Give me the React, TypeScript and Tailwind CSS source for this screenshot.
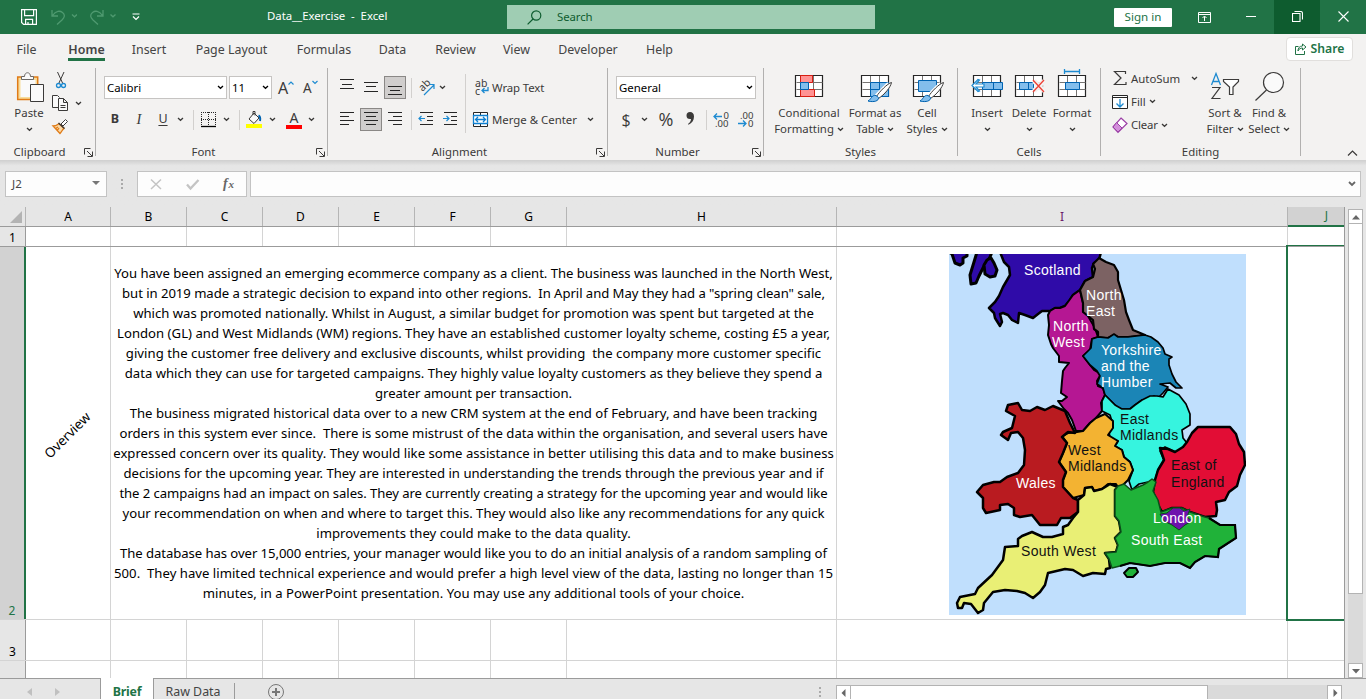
import type { ReactNode } from "react";

type Kids = { children?: ReactNode; className?: string };

/* Vector drawing whose viewBox is given in window coordinates. */
function Art({ x, y, w, h, children, className = "" }: { x: number; y: number; w: number; h: number } & Kids) {
  return (
    <svg width={w} height={h} viewBox={`${x} ${y} ${w} ${h}`} fill="none" stroke="#3b3a39" className={`shrink-0 overflow-visible ${className}`}>
      {children}
    </svg>
  );
}

function Chevron({ className = "text-[#3b3a39]" }: { className?: string }) {
  return (
    <svg width="7" height="5" viewBox="0 0 7 5" fill="none" stroke="currentColor" strokeWidth="1.3" className={`shrink-0 ${className}`}>
      <path d="M1 1l2.5 2.3L6 1" />
    </svg>
  );
}

function Cell({ children, className = "" }: Kids) {
  return <div className={`flex h-full shrink-0 items-center justify-center whitespace-nowrap ${className}`}>{children}</div>;
}

function Group({ label, launcher, children, className = "" }: Kids & { label: string; launcher?: boolean }) {
  return (
    <section className={`flex h-[88px] shrink-0 flex-col border-r border-[#b1b0af] ${className}`}>
      <div className="h-20">{children}</div>
      <div className="flex h-2 items-center">
        <span className="flex-1 text-center">{label}</span>
        {launcher && (
          <span className="w-4 pl-[5px]">
            <svg width="9" height="9" viewBox="0 0 9 9" fill="none" stroke="#3b3a39">
              <path d="M.5 6.5v-6h6M3 3l5 5M8.500 3.500v5h-5" />
            </svg>
          </span>
        )}
      </div>
    </section>
  );
}

function Big({ icon, top, bottom, className = "" }: { icon: ReactNode; top: string; bottom?: string; className?: string }) {
  return (
    <div className={`flex shrink-0 flex-col items-center whitespace-nowrap leading-4 ${className}`}>
      <div className="flex h-[37px] items-start justify-center">{icon}</div>
      <div>{top}</div>
      <div className="flex h-4 items-center gap-[3px]">
        {bottom}
        <Chevron />
      </div>
    </div>
  );
}

function Select({ text, className = "" }: { text: string; className?: string }) {
  return (
    <div className={`flex h-[23px] shrink-0 items-center justify-between border border-[#c6c4c2] bg-white pl-0.5 pr-0.5 text-black ${className}`}>
      {text}
      <Chevron className="text-black" />
    </div>
  );
}

function Lines({ d, on }: { d: string; on?: boolean }) {
  return (
    <div className={on ? "flex h-[23px] w-[22px] items-center justify-center border border-[#8a8886] bg-[#d0cecd]" : "flex"}>
      <svg width="15" height="15" viewBox="0 0 15 15" stroke="#262626" fill="none" className="shrink-0 overflow-visible">
        <path d={d} />
      </svg>
    </div>
  );
}

function Divider({ className = "" }: { className?: string }) {
  return <div className={`w-px shrink-0 bg-[#d2d0ce] ${className}`} />;
}

function TitleBar() {
  return (
    <header className="flex h-[34px] items-center bg-[#217346] text-[11.4px] text-white">
      <div className="flex w-[145px] items-center pl-[21px]">
        <svg width="16" height="16" viewBox="0 0 16 16" fill="none" stroke="#fff" strokeWidth="1.2">
          <path d="M.6.6h14.800v14.800H2.600L.6 13.400zM3.600.6v6h9v-6M4.600 15.400v-5h7v5M7 15v-2" />
        </svg>
        <svg width="26" height="16" viewBox="0 0 26 16" fill="none" stroke="#4f9a70" strokeWidth="1.300" className="ml-[14px]">
          <path d="M1 1v6h6M1.500 6.500C5 1.500 9 1.500 11.500 3.500c3 2.500 2 5-.5 7.500l-5 4.500M21 5.500l2.500 2.300L26 5.500" />
        </svg>
        <svg width="28" height="16" viewBox="0 0 28 16" fill="none" stroke="#4f9a70" strokeWidth="1.300" className="ml-3">
          <path d="M14 1v6H8M13.500 6.500C10 1.500 6 1.500 3.500 3.500c-3 2.500-2 5 .5 7.500l5 4.500M21.500 5.500L24 7.800l2.500-2.300" />
        </svg>
        <svg width="8" height="8" viewBox="0 0 8 8" fill="none" stroke="#fff" strokeWidth="1.200" className="ml-[15px] shrink-0">
          <path d="M.5 1h7M1 3.500l3 3 3-3" />
        </svg>
      </div>
      <div className="w-[362px] whitespace-pre pb-0.5 pl-[122px] tracking-[-0.03px]">Data__Exercise  -  Excel</div>
      <div className="flex h-6 w-[368px] items-center bg-[#9fcdb3] pl-5 text-[#0e5c2f]">
        <svg width="15" height="15" viewBox="0 0 15 15" fill="none" stroke="currentColor" strokeWidth="1.200">
          <circle cx="9.200" cy="5.500" r="4.600" />
          <path d="M6 9L.6 14.400" />
        </svg>
        <span className="pl-[15px] tracking-[-0.1px]">Search</span>
      </div>
      <div className="ml-[239px] flex h-[19px] w-[58px] items-center justify-center rounded-[1px] bg-white text-[11.600px] text-[#217346]">Sign in</div>
      <div className="ml-[26px] w-12">
        <svg width="13" height="11" viewBox="0 0 13 11" fill="none" stroke="#fff">
          <path d="M.5.5h12v10H.5zM.5 2.500h12M6.500 9V4.500M4.500 6l2-2 2 2" />
        </svg>
      </div>
      <div className="mb-0.5 h-px w-2.5 bg-white" />
      <div className="ml-[18px] flex h-full w-[46px] items-center justify-center bg-[#0e5c2f] pb-0.5">
        <svg width="11" height="11" viewBox="0 0 11 11" fill="none" stroke="#fff" strokeWidth="1.100">
          <path d="M.5 2.500h7.500v8H.5zM2.500.5H8.500Q10.500.5 10.500 2.500V8.500" />
        </svg>
      </div>
      <div className="flex flex-1 items-center justify-center pb-0.5">
        <svg width="11" height="11" viewBox="0 0 11 11" stroke="#fff" strokeWidth="1.100">
          <path d="M.5.5l10 10M10.500.5l-10 10" />
        </svg>
      </div>
    </header>
  );
}

const tabs: [string, string][] = [
  ["File", "w-[53px]"],
  ["Home", "w-[67px]"],
  ["Insert", "w-[58px]"],
  ["Page Layout", "w-[107px]"],
  ["Formulas", "w-[78px]"],
  ["Data", "w-[59px]"],
  ["Review", "w-[67px]"],
  ["View", "w-[55px]"],
  ["Developer", "w-[88px]"],
  ["Help", "w-[55px]"],
];

function TabRow() {
  return (
    <nav className="flex h-[34px] items-start text-[12.4px] leading-5 text-[#444]">
      {tabs.map(([name, w]) => (
        <div key={name} className={`flex shrink-0 justify-center pt-1.5 ${w}`}>
          {name === "Home" ? (
            <span className="h-[21px] border-b-[3px] border-[#217346] font-semibold leading-5 tracking-[0.1px]">{name}</span>
          ) : (
            name
          )}
        </div>
      ))}
      <div className="ml-auto mr-[13px] mt-[3px] flex h-6 w-[67px] items-center justify-center gap-1 rounded-sm border border-[#e1dfdd] bg-white text-[12.200px] font-semibold text-[#217346]">
        <svg width="12" height="12" viewBox="0 0 12 12" fill="none" stroke="currentColor">
          <path d="M3.500 3.500H.5v8h9V8M7.500 1l3.500 3-3.500 3V5C5.500 5 4 5.800 3 8c0-3 1.500-5 4.500-5z" />
        </svg>
        Share
      </div>
    </nav>
  );
}

function TableGrid({ x }: { x: number }) {
  return (
    <>
      <path fill="#fff" stroke="#262626" strokeWidth="1.200" d={`M${x} 75.500h27v21h-27z`} />
      <path stroke="#767472" d={`M${x + 1} 82.500h26M${x + 1} 89.500h26M${x + 9} 76v20M${x + 18} 76v20`} />
    </>
  );
}

function Brush({ x }: { x: number }) {
  return (
    <>
      <path stroke="#fff" strokeWidth="5" d={`M${x + 27} 84l-13 13`} />
      <path fill="#fff" stroke="#3b3a39" d={`M${x + 29.5} 82.500c-4 1-12 9-15 14l2 2c6-4 12-11 13-16z`} />
      <path fill="#83beec" stroke="#0063b1" d={`M${x + 14} 95.500c-4-1-5 4-8 5.500 6 1.500 11 0 10.500-3.500z`} />
    </>
  );
}

function Ribbon() {
  return (
    <div className="flex h-[92px] items-start bg-[#f3f2f1] text-[11.4px] text-[#3b3a39]">
      <Group label="Clipboard" launcher className="w-24">
        <div className="flex">
          <Big
            className="w-[58px]"
            top="Paste"
            icon={
              <Art x={13} y={68} w={34} h={37}>
                <path fill="#f8dd9b" stroke="#e07b17" strokeWidth="1.500" d="M18.700 77h20v22.500h-20z" />
                <path fill="#fafafa" stroke="none" d="M21.500 80h15v17h-15z" />
                <path fill="#fafafa" stroke="#6b6967" d="M22.500 79.500v-3h3c0-5 6-5 6 0h3v3z" />
                <path fill="#fafafa" d="M31.500 84.500h13v17h-13z" />
              </Art>
            }
          />
          <div className="-ml-2 w-[21px]">
            <div className="flex h-6 items-center justify-center">
              <Art x={54} y={71} w={13} h={17}>
                <path d="M57.500 71l5.500 12M64 71l-5.500 12" />
                <circle cx="58.500" cy="84.500" r="2" stroke="#1e8bd1" strokeWidth="1.300" />
                <circle cx="63.500" cy="84.500" r="2" stroke="#1e8bd1" strokeWidth="1.300" />
              </Art>
            </div>
            <div className="flex h-[23px] items-center justify-center">
              <Art x={53} y={95} w={17} h={17}>
                <path fill="#fafafa" d="M59.500 107.500h-6v-12h5l2 2M59.500 98.500h5l4 4v8h-9zM64.500 98.500v4h4M61.500 105.500h5M61.500 107.500h5" />
              </Art>
            </div>
            <div className="flex h-[22px] items-center justify-center">
              <Art x={53} y={119} w={17} h={15}>
                <path fill="#fff" d="M62 124l4.500-4.500 2 2L64 126z" />
                <path fill="#fbd9a5" stroke="#e07b17" strokeWidth="1.300" d="M54 126c3 0 4-1 6-2.500l5 5c-2 1.500-2 3-4 5zM56 129l3-2M58 131l2-3" />
                <path stroke="#3b3a39" strokeWidth="1.300" d="M59.500 123l6 5.500" />
              </Art>
            </div>
          </div>
          <div className="flex h-[71px] w-[14px] items-center justify-center">
            <Chevron />
          </div>
        </div>
      </Group>

      <Group label="Font" launcher className="w-[232px]">
        <div className="flex gap-[2px] pl-2 pt-2">
          <Select text="Calibri" className="w-[123px]" />
          <Select text="11" className="w-[43px]" />
          <div className="flex h-[23px] w-[27px] items-center pl-1">
            <span className="text-[16px]">A</span>
            <svg width="6" height="14" viewBox="0 0 6 14" fill="none" stroke="#1e8bd1" strokeWidth="1.200">
              <path d="M.5 3.500L3 1l2.500 2.500" />
            </svg>
          </div>
          <div className="flex h-[23px] w-[21px] items-center pt-px">
            <span className="text-[13.500px]">A</span>
            <svg width="6" height="16" viewBox="0 0 6 16" fill="none" stroke="#1e8bd1" strokeWidth="1.200">
              <path d="M.5 1L3 3.500 5.500 1" />
            </svg>
          </div>
        </div>
        <div className="mt-[9px] flex h-[23px] pl-2 text-[12.500px]">
          <Cell className="w-[22px] font-bold">B</Cell>
          <Cell className="w-[26px] font-['Liberation_Serif'] text-[14.500px] italic">I</Cell>
          <Cell className="w-[22px] underline underline-offset-2">U</Cell>
          <Cell className="w-3"><Chevron /></Cell>
          <Cell className="w-[15px]"><Divider className="h-5" /></Cell>
          <Cell className="w-4">
            <Art x={201} y={111} w={16} h={16}>
              <path strokeDasharray="1 1" stroke="#262626" d="M201 111.500h15M201.500 111v14M215.500 111v14M208.500 111v14M201 118.500h15" />
              <path stroke="#000" strokeWidth="1.300" d="M201 125.500h15" />
            </Art>
          </Cell>
          <Cell className="w-[18px]"><Chevron /></Cell>
          <Cell className="w-2"><Divider className="h-5" /></Cell>
          <Cell className="w-[23px]">
            <Art x={247} y={110} w={17} h={18}>
              <path fill="#fafafa" d="M250 118l5-6 5 5-5 5.500zM254 114v-3.500h2v4" />
              <path stroke="#0063b1" strokeWidth="2" d="M259.500 114.500c2 1 2 3 1.500 5.500" />
              <path fill="#ff0" stroke="none" d="M247 123h16v4h-16z" />
            </Art>
          </Cell>
          <Cell className="w-[13px]"><Chevron /></Cell>
          <Cell className="w-[30px] flex-col">
            <span className="text-[14px] leading-[13px]">A</span>
            <span className="mt-px h-1 w-4 bg-[#f00]" />
          </Cell>
          <Cell className="w-[5px]"><Chevron /></Cell>
        </div>
      </Group>

      <Group label="Alignment" launcher className="w-[280px]">
        <div className="flex h-full">
          <div className="w-[137px] pl-2 pt-2">
            <div className="flex h-[23px]">
              <Cell className="w-[22px]"><Lines d="M0-.5h14M2 4.500h10M0 8.500h14" /></Cell>
              <Cell className="w-[26px]"><Lines d="M0 2.500h14M2 6.500h10M0 11.500h14" /></Cell>
              <Cell className="w-[22px]"><Lines on d="M0 6.500h14M2 10.500h10M0 14.500h14" /></Cell>
              <Cell className="w-[10px]"><Divider className="h-5" /></Cell>
              <Cell className="w-[20px]">
                <Art x={417} y={78} w={18} h={18}>
                  <text x="0" y="0" transform="translate(422.500 91) rotate(-45)" fontSize="10.500" stroke="none" fill="#3b3a39">ab</text>
                  <path stroke="#1e8bd1" strokeWidth="1.200" d="M424 94l10-10M429.500 83.500h4.500v4.500" />
                </Art>
              </Cell>
              <Cell className="w-[12px]"><Chevron /></Cell>
            </div>
            <div className="mt-[9px] flex h-[23px]">
              <Cell className="w-[22px]"><Lines d="M0 .5h14M0 4.500h9M0 8.500h14M0 12.500h9" /></Cell>
              <Cell className="w-[26px]"><Lines on d="M0 .5h14M2 4.500h10M0 8.500h14M2 12.500h10" /></Cell>
              <Cell className="w-[22px]"><Lines d="M0 .5h14M5 4.500h9M0 8.500h14M5 12.500h9" /></Cell>
              <Cell className="w-[10px]"><Divider className="h-5" /></Cell>
              <Cell className="w-[20px] pb-0.5">
                <Art x={418} y={112} w={16} h={14}>
                  <path stroke="#262626" d="M420 112.500h13M427 116.500h6M427 120.500h6M420 124.500h13" />
                  <path stroke="#1e8bd1" strokeWidth="1.200" d="M419 118.500h6M421.500 116l-2.500 2.500 2.500 2.500" />
                </Art>
              </Cell>
              <Cell className="w-[28px] pb-0.5">
                <Art x={442} y={112} w={16} h={14}>
                  <path stroke="#262626" d="M444 112.500h13M451 116.500h6M451 120.500h6M444 124.500h13" />
                  <path stroke="#1e8bd1" strokeWidth="1.200" d="M443 118.500h6M446.500 116l2.500 2.500-2.500 2.500" />
                </Art>
              </Cell>
            </div>
          </div>
          <Divider className="mt-1.5 h-[59px]" />
          <div className="pl-[7px] pt-2">
            <div className="flex h-[23px] items-center gap-0.5 pl-0.5">
              <Art x={475} y={78} w={15} h={19}>
                <text x="475" y="87" fontSize="10.500" stroke="none" fill="#3b3a39">ab</text>
                <text x="475" y="95" fontSize="10.500" stroke="none" fill="#3b3a39">c</text>
                <path stroke="#1e8bd1" strokeWidth="1.300" d="M488 87v3.500h-6M484.500 88l-2.500 2.500 2.500 2.500" />
              </Art>
              <span className="tracking-[-0.1px]">Wrap Text</span>
            </div>
            <div className="mt-[9px] flex h-[23px] items-center">
              <Art x={473} y={111} w={16} h={16}>
                <path fill="#fff" stroke="#262626" d="M473.500 111.500h14v14h-14zM480.500 112v3M480.500 122v4" />
                <path fill="#fff" stroke="#0e7fd0" strokeWidth="1.300" d="M473.500 114.500h14v8h-14zM475.500 118.500h10M478 116l-2.500 2.500L478 121M483 116l2.500 2.500L483 121" />
              </Art>
              <span className="w-[98px] pl-[3px]">Merge &amp; Center</span>
              <Chevron />
            </div>
          </div>
        </div>
      </Group>

      <Group label="Number" launcher className="w-[156px]">
        <div className="pl-2 pt-2">
          <Select text="General" className="w-[140px]" />
          <div className="mt-[9px] flex h-[23px]">
            <Cell className="w-5 font-['Open_Sans'] text-[16px]">$</Cell>
            <Cell className="w-4"><Chevron /></Cell>
            <Cell className="w-7 font-['Open_Sans'] text-[18px]">%</Cell>
            <Cell className="w-5 pb-0.5">
              <svg width="9" height="13" viewBox="0 0 9 13" fill="#3b3a39">
                <path d="M4 0a3.500 3.500 0 0 0 0 7h1c0 2-1.500 4-3 5l.5.8C6 11 8 8.500 8 4.500 8 1.500 6.500 0 4 0z" />
              </svg>
            </Cell>
            <Cell className="w-3"><Divider className="h-5" /></Cell>
            <Cell className="w-[18px]">
              <Art x={712} y={110} w={16} h={17}>
                <text x="722.500" y="118" fontSize="9.500" stroke="none" fill="#3b3a39">0</text>
                <text x="714" y="126" fontSize="9.500" stroke="none" fill="#3b3a39">.00</text>
                <path stroke="#1e8bd1" strokeWidth="1.300" d="M713 115.500h8M716 112.500l-3 3 3 3" />
              </Art>
            </Cell>
            <Cell className="w-8">
              <Art x={737} y={110} w={17} h={17}>
                <text x="739" y="118" fontSize="9.500" stroke="none" fill="#3b3a39">.00</text>
                <text x="747" y="126" fontSize="9.500" stroke="none" fill="#3b3a39">0</text>
                <path stroke="#1e8bd1" strokeWidth="1.300" d="M737 122.500h8M742 119.500l3 3-3 3" />
              </Art>
            </Cell>
          </div>
        </div>
      </Group>

      <Group label="Styles" className="w-[194px]">
        <div className="flex pl-[13px]">
          <Big
            className="w-16"
            top="Conditional"
            bottom="Formatting"
            icon={
              <Art x={794} y={68} w={30} h={34}>
                <TableGrid x={795.5} />
                <path fill="#ff9393" stroke="#d81e12" d="M800.500 75.500h12v7h-12zM800.500 89.500h14v7h-14z" />
                <path fill="#83beec" stroke="#0063b1" d="M800.500 82.500h8v7h-8z" />
              </Art>
            }
          />
          <Big
            className="ml-[7px] w-[54px] tracking-[-0.1px]"
            top="Format as"
            bottom="Table"
            icon={
              <Art x={859} y={68} w={32} h={36}>
                <TableGrid x={861.5} />
                <path fill="#83beec" stroke="#0063b1" d="M870.500 82.500h18v14h-18zM870.500 89.500h18M879.500 82v14" />
                <Brush x={862} />
              </Art>
            }
          />
          <Big
            className="ml-0.5 w-[46px]"
            top="Cell"
            bottom="Styles"
            icon={
              <Art x={911} y={68} w={32} h={36}>
                <TableGrid x={913.5} />
                <path fill="#83beec" stroke="#0063b1" d="M918.500 80.500h18v11h-18z" />
                <Brush x={914} />
              </Art>
            }
          />
        </div>
      </Group>

      <Group label="Cells" className="w-[143px]">
        <div className="flex pl-[7px]">
          <Big
            className="w-11"
            top="Insert"
            icon={
              <Art x={971} y={68} w={33} h={34}>
                <TableGrid x={973.5} />
                <path fill="#83beec" stroke="#0063b1" d="M982.500 82.500h20v7h-20zM993.500 82v7" />
                <path fill="#fff" stroke="#1e8bd1" strokeWidth="1.200" d="M984 84h-8l3.500-4-1.500-.5-6 6 6 6 1.500-.500-3.500-4h8z" />
              </Art>
            }
          />
          <Big
            className="w-10"
            top="Delete"
            icon={
              <Art x={1014} y={68} w={31} h={34}>
                <TableGrid x={1015.5} />
                <path fill="#83beec" stroke="#0063b1" d="M1019.500 82.500h14v7h-14zM1028.500 82v7" />
                <path stroke="#f3f2f1" strokeWidth="5" d="M1034 81l10 10M1044 81l-10 10" />
                <path stroke="#ee4136" strokeWidth="1.300" d="M1033 80l11 12M1044 80l-11 12" />
              </Art>
            }
          />
          <Big
            className="w-[46px]"
            top="Format"
            icon={
              <Art x={1056} y={68} w={31} h={34}>
                <TableGrid x={1057.5} />
                <path fill="#83beec" stroke="#0063b1" d="M1064.500 82.500h14v7h-14z" />
                <path stroke="#1e8bd1" strokeWidth="1.300" d="M1063.500 71.500h15M1063.500 69v5M1078.500 69v5" />
              </Art>
            }
          />
        </div>
      </Group>

      <Group label="Editing" className="w-[200px]">
        <div className="flex">
          <div className="w-[100px] pl-3">
            <div className="flex h-[21px] items-center">
              <Art x={1113} y={71} w={14} h={15}>
                <path strokeWidth="1.200" d="M1125.500 74v-2.500h-11l6.500 6.500-6.500 6.500h11.500V82" />
              </Art>
              <span className="w-16 pl-1">AutoSum</span>
              <Chevron />
            </div>
            <div className="flex h-[25px] items-center">
              <Art x={1113} y={94} w={16} h={14}>
                <path fill="#fff" stroke="#262626" d="M1112.500 94.500h15v13h-15zM1113 96.500h14" />
                <path stroke="#1e8bd1" strokeWidth="1.300" d="M1120 98v7.500M1116.500 102.500l3.500 3.500 3.500-3.500" />
              </Art>
              <span className="pl-0.5 pr-[3px]">Fill</span>
              <Chevron />
            </div>
            <div className="flex h-[22px] items-center">
              <Art x={1113} y={116} w={16} h={16}>
                <path fill="#fff" stroke="#9b3fa6" strokeWidth="1.200" d="M1121 117l6 5.500-9 9-5-5.500z" />
                <path fill="#d38fdb" stroke="#9b3fa6" d="M1116.500 121.500l5.500 5.500-4 4-5-5z" />
              </Art>
              <span className="pl-0.5 pr-[3px] tracking-[-0.15px]">Clear</span>
              <Chevron />
            </div>
          </div>
          <Big
            className="w-12"
            top="Sort &amp;"
            bottom="Filter"
            icon={
              <Art x={1210} y={68} w={30} h={34}>
                <path stroke="#1e8bd1" strokeWidth="1.300" d="M1211.500 85l4.500-11.500 4.500 11.500M1213 81.500h6" />
                <path strokeWidth="1.200" d="M1212 87.500h8l-8 11h8.500" />
                <path fill="#fff" strokeWidth="1.200" d="M1223.500 79.500h15v2l-5.500 5.500v7.500h-3.500V87l-6-5.500z" />
              </Art>
            }
          />
          <Big
            className="w-10"
            top="Find &amp;"
            bottom="Select"
            icon={
              <Art x={1253} y={68} w={31} h={34}>
                <circle cx="1272.500" cy="82.500" r="10" fill="#fafafa" strokeWidth="1.200" />
                <path strokeWidth="1.200" d="M1265.500 90l-11 10.500" />
              </Art>
            }
          />
        </div>
      </Group>

      <div className="flex h-full flex-1 items-end justify-end pb-1 pr-2">
        <svg width="11" height="6" viewBox="0 0 11 6" fill="none" stroke="#3b3a39" strokeWidth="1.200">
          <path d="M1 5.500L5.500 1 10 5.500" />
        </svg>
      </div>
    </div>
  );
}

function FormulaBar() {
  return (
    <div className="flex h-[47px] items-start bg-gradient-to-b from-[#cfcfcf] from-0% to-[#e6e6e6] to-[12%] pl-[5px] pt-[11px] text-[11.500px] text-[#444]">
      <div className="flex h-[26px] w-[102px] items-center justify-between border border-[#c3c3c3] bg-[#fdfdfd] pl-1.5 pr-1.5">
        J2
        <svg width="8" height="4" viewBox="0 0 8 4" fill="#777" className="mb-0.5"><path d="M0 0h8L4 4z" /></svg>
      </div>
      <div className="flex h-[26px] w-[30px] flex-col items-center justify-center gap-0.5">
        <span className="size-0.5 bg-[#aaa]" />
        <span className="size-0.5 bg-[#aaa]" />
        <span className="size-0.5 bg-[#aaa]" />
      </div>
      <div className="flex h-[26px] w-[110px] items-center border border-[#c3c3c3] bg-[#fdfdfd]">
        <svg width="108" height="24" viewBox="138 172 108 24" fill="none" stroke="#c4c4c4" strokeWidth="1.800">
          <path d="M151 179.500l10 9.500M161 179.500l-10 9.500" strokeWidth="1.500" />
          <path d="M187 184.500l3.500 4 8-8.500" strokeWidth="2.300" />
          <text x="223" y="188" fontSize="14" fontStyle="italic" fontWeight="bold" fontFamily="Liberation Serif" stroke="none" fill="#666">f</text>
          <text x="228.500" y="188" fontSize="11" fontStyle="italic" fontWeight="bold" fontFamily="Liberation Serif" stroke="none" fill="#666">x</text>
        </svg>
      </div>
      <div className="ml-[3px] flex h-[26px] w-[1111px] items-center justify-end border border-[#c3c3c3] bg-[#fdfdfd] pr-1">
        <svg width="8" height="6" viewBox="0 0 8 6" fill="none" stroke="#666" strokeWidth="1.800"><path d="M1 1l3 3 3-3" /></svg>
      </div>
    </div>
  );
}

const lines: [string, string][] = [
  ["You have been assigned an emerging ecommerce company as a client. The business was launched in the North West,", "tracking-[-0.03px]"],
  ["but in 2019 made a strategic decision to expand into other regions.  In April and May they had a \"spring clean\" sale,", "tracking-[-0.05px]"],
  ["which was promoted nationally. Whilst in August, a similar budget for promotion was spent but targeted at the", "tracking-[-0.01px]"],
  ["London (GL) and West Midlands (WM) regions. They have an established customer loyalty scheme, costing £5 a year,", "tracking-[0.01px]"],
  ["giving the customer free delivery and exclusive discounts, whilst providing  the company more customer specific", "tracking-[0.04px]"],
  ["data which they can use for targeted campaigns. They highly value loyalty customers as they believe they spend a", ""],
  ["greater amount per transaction.", "tracking-[-0.04px]"],
  ["The business migrated historical data over to a new CRM system at the end of February, and have been tracking", ""],
  ["orders in this system ever since.  There is some mistrust of the data within the organisation, and several users have", ""],
  ["expressed concern over its quality. They would like some assistance in better utilising this data and to make business", "tracking-[0.02px]"],
  ["decisions for the upcoming year. They are interested in understanding the trends through the previous year and if", ""],
  ["the 2 campaigns had an impact on sales. They are currently creating a strategy for the upcoming year and would like", "tracking-[-0.08px]"],
  ["your recommendation on when and where to target this. They would also like any recommendations for any quick", ""],
  ["improvements they could make to the data quality.", "tracking-[0.03px]"],
  ["The database has over 15,000 entries, your manager would like you to do an initial analysis of a random sampling of", "tracking-[-0.07px]"],
  ["500.  They have limited technical experience and would prefer a high level view of the data, lasting no longer than 15", "tracking-[0.02px]"],
  ["minutes, in a PowerPoint presentation. You may use any additional tools of your choice.", "tracking-[0.03px]"],
];

const regions: [string, string, number][] = [
  ["#2f0ba8", "949,252 952,254 955,263 960,265 963,263 963,258 967,256 967,252", 3],
  ["#2f0ba8", "977,252 974,262 970,275 971,284 976,283 979,276 984,266 990,257 992,252", 3],
  ["#2f0ba8", "987,260 984,265 985,274 990,277 995,276 997,270 994,263 991,258", 3],
  ["#2f0ba8", "1000,252 1004,262 1009,267 1010,275 1003,287 999,296 995,302 989,308 994,313 995,318 1000,326 1002,322 1000,314 1003,313 1008,315 1012,320 1018,323 1019,313 1025,315 1033,318 1038,314 1042,311 1050,311 1055,308 1060,308 1065,306 1070,300 1073,295 1080,290 1085,281 1093,277 1092,268 1094,263 1099,260 1101,252", 2.5],
  ["#b51793", "1050,311 1048,315 1049,325 1048,335 1051,344 1053,348 1059,356 1059,362 1069,363 1065,368 1063,371 1062,381 1061,393 1067,397 1062,401 1058,401 1064,409 1068,413 1072,420 1076,431 1083,431 1090,423 1096,418 1102,411 1101,403 1105,395 1103,388 1098,386 1097,381 1101,374 1094,370 1090,365 1083,356 1090,350 1092,339 1098,337 1095,328 1088,316 1083,309 1083,303 1080,290 1073,295 1065,306 1060,308 1055,308", 2],
  ["#7c6263", "1099,258 1093,264 1095,269 1093,277 1085,281 1080,290 1083,303 1083,312 1088,316 1093,320 1094,329 1098,332 1098,337 1108,338 1114,335 1118,337 1128,337 1145,335 1133,330 1129,320 1126,312 1124,300 1121,290 1118,280 1118,272 1114,265 1106,262", 2.2],
  ["#1b85b6", "1098,337 1092,339 1091,348 1083,356 1090,365 1097,371 1100,376 1097,384 1103,388 1105,395 1110,400 1115,405 1118,409 1130,409 1135,405 1142,400 1148,399 1154,396 1158,398 1163,393 1168,387 1160,384 1170,383 1176,388 1182,388 1176,382 1172,374 1169,365 1169,359 1172,357 1165,354 1163,348 1158,342 1151,337 1145,335 1128,337 1118,337 1114,334 1108,338", 1.7],
  ["#36f4df", "1105,395 1102,401 1102,411 1110,415 1113,425 1109,432 1110,438 1118,441 1115,446 1122,450 1124,457 1130,462 1133,470 1129,481 1132,490 1139,484 1148,482 1155,480 1158,470 1164,460 1160,451 1165,447 1175,452 1184,448 1187,443 1183,438 1182,430 1190,425 1190,414 1186,404 1179,395 1168,389 1163,397 1157,396 1150,396 1142,400 1135,405 1130,409 1122,409 1115,405", 1.7],
  ["#e20d35", "1187,442 1183,447 1175,452 1168,449 1160,448 1164,460 1158,470 1155,480 1153,492 1157,503 1162,512 1172,508 1182,508 1190,512 1205,517 1216,516 1217,510 1216,502 1225,500 1229,492 1237,486 1240,475 1245,465 1244,452 1239,444 1236,434 1230,427 1198,427 1192,433", 2.5],
  ["#f3b332", "1077,432 1083,431 1090,423 1096,418 1105,414 1113,421 1113,428 1108,435 1118,441 1115,446 1122,450 1124,457 1130,462 1133,470 1128,480 1119,489 1116,484 1108,484 1102,489 1094,491 1092,487 1085,488 1084,495 1073,498 1063,487 1063,480 1066,472 1059,462 1063,453 1067,443 1062,436 1068,433", 2],
  ["#b91b20", "1008,405 1018,403 1022,410 1030,411 1037,407 1045,410 1053,406 1065,411 1070,423 1075,433 1068,432 1062,437 1067,443 1063,453 1059,462 1066,472 1063,480 1063,487 1073,498 1078,500 1078,512 1070,518 1061,518 1057,525 1040,525 1032,515 1020,517 1014,515 1014,508 1008,504 1000,505 1000,510 986,513 983,508 983,498 977,492 983,485 994,482 1000,482 1007,477 1018,473 1024,465 1025,450 1023,438 1018,432 1011,433 1008,440 1001,435 1003,432 1012,428 1015,416 1006,411", 2.5],
  ["#e9ef75", "1078,500 1078,512 1073,518 1068,525 1063,527 1063,534 1052,537 1043,537 1032,532 1022,536 1018,539 1018,546 1005,547 1003,560 992,575 978,588 975,594 960,597 957,603 958,608 962,608 964,603 971,604 978,613 983,610 984,603 993,592 1005,590 1017,591 1025,593 1033,598 1040,592 1045,585 1048,573 1065,569 1073,570 1083,576 1093,573 1105,574 1106,569 1110,568 1109,559 1105,553 1116,552 1118,545 1115,538 1121,532 1119,521 1115,516 1115,490 1118,487 1110,484 1102,489 1094,491 1092,487 1085,488 1084,495", 2.5],
  ["#20b239", "1124,484 1131,490 1143,485 1148,482 1152,479 1156,482 1153,491 1158,500 1161,512 1172,508 1182,508 1190,512 1205,517 1209,518 1220,525 1235,525 1236,538 1219,549 1218,557 1205,556 1195,562 1190,568 1180,563 1165,563 1150,566 1130,563 1120,566 1112,568 1109,559 1105,553 1116,552 1118,545 1115,538 1121,532 1119,521 1115,516 1115,490 1118,486", 1.5],
  ["#6d12ad", "1160,514 1167,513 1173,508 1180,508 1184,511 1190,509 1187,517 1192,521 1185,525 1179,530 1172,525 1164,521", 1],
  ["#20b239", "1124,573 1129,568 1136,568 1138,572 1133,577 1127,577", 2],
];

const names: [string, number, number, boolean][] = [
  ["Scotland", 1024, 275, true],
  ["North", 1086, 300, true],
  ["East", 1086, 316, true],
  ["North", 1053, 331, true],
  ["West", 1052, 347, true],
  ["Yorkshire", 1101, 355, true],
  ["and the", 1101, 371, true],
  ["Humber", 1101, 387, true],
  ["East", 1120, 424, false],
  ["Midlands", 1120, 440, false],
  ["West", 1068, 455, false],
  ["Midlands", 1068, 471, false],
  ["Wales", 1016, 488, true],
  ["East of", 1171, 470, false],
  ["England", 1171, 487, false],
  ["London", 1153, 523, true],
  ["South East", 1131, 545, true],
  ["South West", 1021, 556, false],
];

function RegionMap() {
  return (
    <svg width="297" height="361" viewBox="949 254 297 361" className="shrink-0 bg-[#c0dffd] font-['Liberation_Sans'] text-[14px]">
      {regions.map(([fill, points, width], i) => (
        <polygon key={i} fill={fill} points={points} stroke={i >= 12 && i < 14 ? "#0b4d19" : "#000"} strokeWidth={width} strokeLinejoin="round" />
      ))}
      <polyline points="1209,518 1220,525 1235,525 1236,538 1219,549 1218,557 1205,556 1195,562 1190,568 1180,563 1165,563 1150,566 1130,563 1120,566" fill="none" stroke="#000" strokeWidth="2.200" />
      {names.map(([text, x, y, light], i) => (
        <text key={i} x={x} y={y} fill={light ? "#fff" : "#111"} letterSpacing="0.3">{text}</text>
      ))}
    </svg>
  );
}

const columns: [string, string][] = [
  ["A", "w-[85px]"],
  ["B", "w-[76px]"],
  ["C", "w-[76px]"],
  ["D", "w-[76px]"],
  ["E", "w-[76px]"],
  ["F", "w-[76px]"],
  ["G", "w-[76px]"],
  ["H", "w-[270px]"],
  ["I", "w-[451px]"],
];

function EmptyRow({ label, className }: { label?: string; className: string }) {
  return (
    <div className={`flex border-b ${className}`}>
      <div className="flex w-[26px] shrink-0 items-end justify-center border-r border-[#9b9b9b] bg-[#e6e6e6] text-[12px] leading-[17px] text-black">{label}</div>
      {columns.map(([name, w]) => (
        <div key={name} className={`shrink-0 border-r border-[#d4d4d4] ${w}`} />
      ))}
    </div>
  );
}

function Sheet() {
  return (
    <div className="relative w-[1345px] shrink-0 overflow-hidden border-r border-[#9b9b9b] bg-white">
      <div className="flex h-5 border-b border-[#9b9b9b] bg-[#e6e6e6] text-[12px] text-black">
        <div className="flex w-[26px] shrink-0 items-end justify-end border-r border-[#b5b5b5] pb-[3px] pr-[3px]">
          <svg width="12" height="12" viewBox="0 0 12 12" fill="#b3b3b3"><path d="M12 0v12H0z" /></svg>
        </div>
        {columns.map(([name, w]) => (
          <div key={name} className={`flex shrink-0 items-center justify-center border-r border-[#b5b5b5] ${w} ${name === "I" ? "text-[#6b1d6b]" : ""}`}>{name}</div>
        ))}
        <div className="flex h-5 flex-1 items-center justify-end border-b-2 border-[#217346] bg-[#d2d2d2] pr-4 text-[#217346]">J</div>
      </div>
      <EmptyRow label="1" className="h-5 border-[#9b9b9b]" />
      <div className="flex h-[373px] border-b border-[#d4d4d4]">
        <div className="flex w-[26px] shrink-0 items-end justify-center border-r-2 border-[#217346] bg-[#d2d2d2] text-[12px] leading-[17px] text-[#217346]">2</div>
        <div className="flex w-[85px] shrink-0 items-center justify-center border-r border-[#d4d4d4] pr-0.5 pt-[5px]">
          <span className="-rotate-45 text-[13.400px] text-black">Overview</span>
        </div>
        <div className="flex w-[726px] shrink-0 flex-col items-center border-r border-[#d4d4d4] pt-4 text-[13.140px] leading-5 text-black">
          {lines.map(([line, tracking]) => (
            <div key={line} className={`whitespace-pre ${tracking}`}>{line}</div>
          ))}
        </div>
        <div className="w-[451px] shrink-0 border-r border-[#d4d4d4] pl-28 pt-[7px]">
          <RegionMap />
        </div>
      </div>
      <EmptyRow label="3" className="h-[41px] border-[#d4d4d4]" />
      <EmptyRow className="h-[18px] border-transparent" />
      <div className="absolute left-[1286px] top-[38px] h-[376px] w-[70px] border-2 border-t border-[#217346]" />
    </div>
  );
}

function ScrollButton({ d }: { d: string }) {
  return (
    <div className="flex size-[15px] shrink-0 items-center justify-center border border-[#b3b3b3] bg-white">
      <svg width="8" height="8" viewBox="0 0 8 8" fill="#666"><path d={d} /></svg>
    </div>
  );
}

function BottomBar() {
  return (
    <footer className="flex h-[21px] bg-[#e6e6e6] text-[12.400px] text-[#444]">
      <div className="flex w-[101px] shrink-0 items-center gap-[23px] border-r border-t border-[#9b9b9b] pl-[27px] pt-[5px]">
        <svg width="5" height="8" viewBox="0 0 5 8" fill="#c0c0c0"><path d="M5 0v8L0 4z" /></svg>
        <svg width="5" height="8" viewBox="0 0 5 8" fill="#c0c0c0"><path d="M0 0v8l5-4z" /></svg>
      </div>
      <div className="w-[52px] shrink-0 bg-white pt-[5px] text-center font-bold leading-[18px] tracking-[-0.2px] text-[#217346]">Brief</div>
      <div className="flex flex-1 border-t border-[#9b9b9b]">
        <div className="w-[82px] border-l border-[#9b9b9b] pt-1 text-center leading-[18px]">
          <div className="border-r border-[#9b9b9b] pr-0.5">Raw Data</div>
        </div>
        <svg width="18" height="20" viewBox="0 0 18 20" fill="none" stroke="#777" className="ml-8">
          <circle cx="9" cy="13" r="7.500" />
          <path strokeWidth="2" d="M5 13h8M9 9v8" />
        </svg>
        <div className="ml-[534px] flex flex-col gap-0.5 pt-2">
          <span className="size-0.5 bg-[#aaa]" />
          <span className="size-0.5 bg-[#aaa]" />
          <span className="size-0.5 bg-[#aaa]" />
        </div>
        <div className="ml-[15px] mt-1.5 flex w-[506px] bg-[#dadada]">
          <ScrollButton d="M5.500 0v8L1.500 4z" />
          <div className="h-[15px] w-[357px] border border-l-0 border-[#b3b3b3] bg-white" />
          <div className="ml-auto"><ScrollButton d="M2.500 0v8l4-4z" /></div>
        </div>
        <div className="flex-1" />
      </div>
    </footer>
  );
}

export default function App() {
  return (
    <main className="h-[699px] w-[1366px] overflow-hidden bg-[#e6e6e6] font-['Noto_Sans','Open_Sans',sans-serif]">
      <TitleBar />
      <div className="bg-[#f3f2f1]">
        <TabRow />
        <Ribbon />
      </div>
      <FormulaBar />
      <div className="flex h-[471px]">
        <Sheet />
        <div className="ml-[3px] mt-0.5 flex h-[469px] w-[15px] flex-col bg-[#dadada]">
          <ScrollButton d="M4 2l4 4.500H0z" />
          <div className="h-[370px] border border-t-0 border-[#b3b3b3] bg-white" />
          <div className="mt-auto"><ScrollButton d="M0 2h8L4 6.500z" /></div>
        </div>
      </div>
      <BottomBar />
    </main>
  );
}
